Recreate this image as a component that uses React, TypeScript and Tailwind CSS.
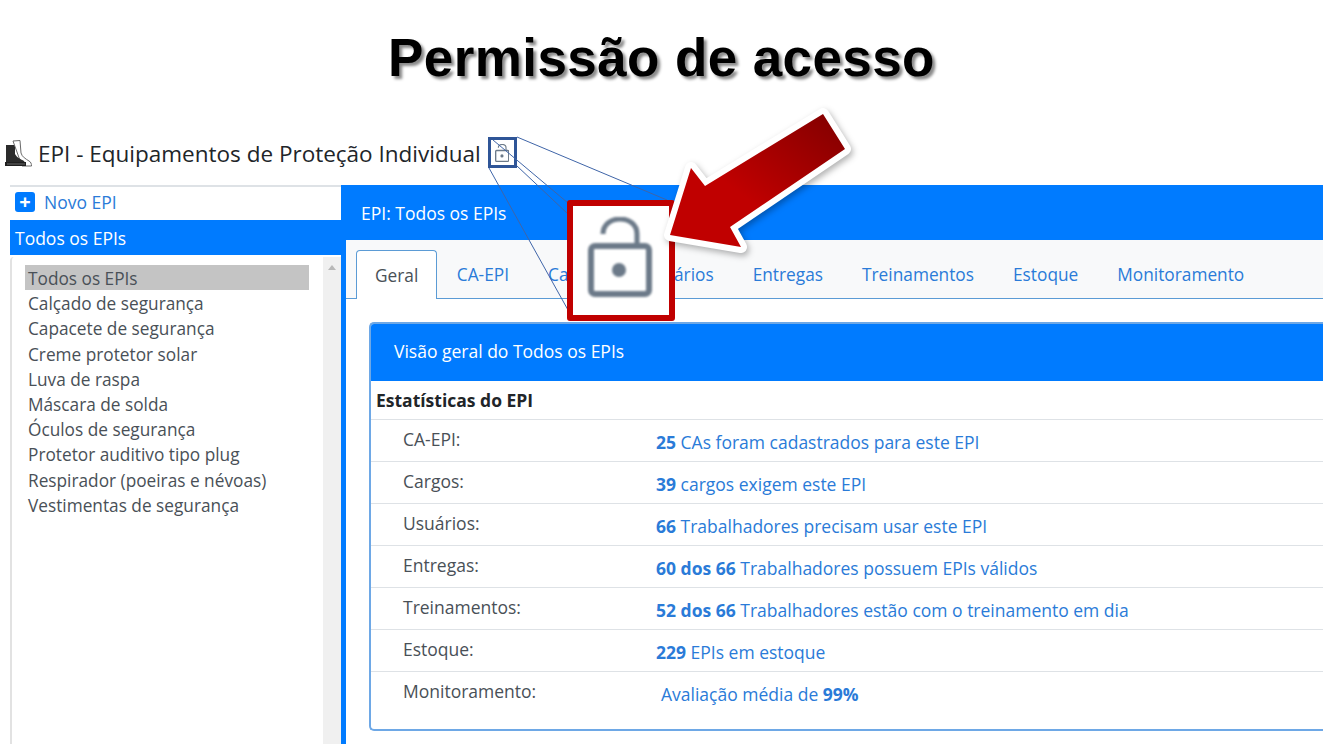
import React from 'react';

const categories = [
  'Todos os EPIs',
  'Calçado de segurança',
  'Capacete de segurança',
  'Creme protetor solar',
  'Luva de raspa',
  'Máscara de solda',
  'Óculos de segurança',
  'Protetor auditivo tipo plug',
  'Respirador (poeiras e névoas)',
  'Vestimentas de segurança',
];

const tabs = ['CA-EPI', 'Cargos', 'Usuários', 'Entregas', 'Treinamentos', 'Estoque', 'Monitoramento'];

const stats = [
  { label: 'CA-EPI:', strong: '25', text: ' CAs foram cadastrados para este EPI' },
  { label: 'Cargos:', strong: '39', text: ' cargos exigem este EPI' },
  { label: 'Usuários:', strong: '66', text: ' Trabalhadores precisam usar este EPI' },
  { label: 'Entregas:', strong: '60 dos 66', text: ' Trabalhadores possuem EPIs válidos' },
  { label: 'Treinamentos:', strong: '52 dos 66', text: ' Trabalhadores estão com o treinamento em dia' },
  { label: 'Estoque:', strong: '229', text: ' EPIs em estoque' },
];

function BootIcon() {
  return (
    <svg width="28" height="28" viewBox="0 0 28 28" className="shrink-0">
      <path d="M9 1 L16 0.5 L17 13 C18 17 22 19 25 21 C27 22 27.5 24 27.5 26 L18 26 Z" fill="#fff" stroke="#6a6a6a" strokeWidth="1" />
      <path d="M2 5 H10 L11 7 V14 C13 18 17 19 20 21 C21 22 21 24 21 26 H2 Z" fill="#2b2b2b" />
      <path d="M1 22 H22 V26 H1 Z" fill="#1f1f1f" />
      <path d="M3 24 H21" stroke="#8a8a8a" strokeWidth="0.7" />
    </svg>
  );
}

function UnlockIcon({ height }: { height: number }) {
  return (
    <svg width={height * 0.8} height={height} viewBox="0 0 64 80" fill="none" stroke="#6c7a89">
      <path d="M15 17 C15 -3 49 -3 49 17 V27" strokeWidth="5" />
      <rect x="3" y="29" width="58" height="48" rx="4" strokeWidth="6" />
      <circle cx="31" cy="53" r="7" fill="#6c7a89" stroke="none" />
    </svg>
  );
}

export default function App() {
  return (
    <div className="relative h-[744px] w-[1323px] overflow-hidden bg-white font-['Open_Sans',sans-serif] text-[17.5px] text-[#495057]">
      <h1 className="flex h-[116px] items-center justify-center font-['Liberation_Sans',sans-serif] text-[53px] font-bold tracking-[0.4px] text-black [text-shadow:3px_3px_3px_#8a8a8a]">
        Permissão de acesso
      </h1>

      <div className="flex h-[69px] items-center pl-[4px] pt-[6px]">
        <BootIcon />
        <span className="ml-[6px] text-[22.5px] text-[#212529]">EPI - Equipamentos de Proteção Individual</span>
        <span className="-mt-[2px] ml-[7px] flex h-[31px] w-[29px] items-center justify-center border-[3px] border-[#2f5597]">
          <UnlockIcon height={18} />
        </span>
      </div>

      <div className="ml-[10px] flex h-[559px]">
        <aside className="flex w-[331px] shrink-0 flex-col border-t-2 border-[#dee2e6]">
          <div className="flex h-[33px] items-center gap-[9px] pb-[3px] pl-[5px] text-[#2a7bd8]">
            <span className="flex h-[20px] w-[20px] items-center justify-center rounded-[3px] bg-[#007bff] text-[20px] font-bold leading-none text-white">+</span>
            Novo EPI
          </div>
          <div className="flex h-[35px] items-center bg-[#007bff] pl-[5px] pt-[2px] text-white">Todos os EPIs</div>
          <div className="mt-[2px] flex flex-1 rounded-t-[4px] border-l-2 border-[#e2e2e2]">
            <ul className="flex-1 pl-[13px] pr-[14px] pt-[8px] text-[17.25px]">
              {categories.map((c, i) => (
                <li key={c} className={`h-[25.2px] pl-[3px] leading-[27px] ${i === 0 ? 'bg-[#c4c4c4]' : ''}`}>{c}</li>
              ))}
            </ul>
            <div className="flex w-[18px] justify-center bg-[#f0f0f0] pt-[8px]">
              <div className="h-0 w-0 border-x-[4px] border-b-[5px] border-x-transparent border-b-[#b8b8b8]" />
            </div>
          </div>
        </aside>

        <main className="flex min-w-0 flex-1 flex-col border-l-[5px] border-[#007bff]">
          <div className="flex h-[55px] items-center bg-[#007bff] pl-[15px] pt-[2px] text-white">EPI: Todos os EPIs</div>
          <nav className="flex h-[59px] items-end border-b border-[#5b9bd5] bg-[#f8f9fa] pl-[10px] text-[17.3px]">
            <span className="-mb-px flex h-[49px] items-center rounded-t-[4px] border border-b-0 border-[#5b9bd5] bg-white px-[18px] pt-[1px]">Geral</span>
            {tabs.map(t => (
              <span key={t} className="flex h-[48px] items-center px-[19.5px] pt-[2px] text-[#2a7bd8]">{t}</span>
            ))}
          </nav>
          <section className="ml-[23px] mt-[23px] h-[409px] rounded-l-[5px] border-y-2 border-l-2 border-[#6ea8e6]">
            <div className="flex h-[57px] items-center rounded-tl-[3px] bg-[#007bff] pb-[2px] pl-[23px] text-white">Visão geral do Todos os EPIs</div>
            <div className="flex h-[39px] items-center border-b border-[#dee2e6] pl-[5px] font-bold text-[#212529]">Estatísticas do EPI</div>
            {stats.map(s => (
              <div key={s.label} className="flex h-[42px] border-b border-[#dee2e6]">
                <span className="w-[285px] pl-[32px] pt-[6px]">{s.label}</span>
                <span className="pt-[9px] text-[#2a7bd8]"><b>{s.strong}</b>{s.text}</span>
              </div>
            ))}
            <div className="flex h-[42px]">
              <span className="w-[290px] pl-[32px] pt-[6px]">Monitoramento:</span>
              <span className="pt-[9px] text-[#2a7bd8]">Avaliação média de <b>99%</b></span>
            </div>
          </section>
        </main>
      </div>

      {/* callout over the page */}
      <svg className="pointer-events-none absolute left-0 top-0" width="1323" height="744">
        <g stroke="#3f65a8" strokeWidth="1">
          <line x1="517" y1="137" x2="667" y2="200" />
          <line x1="493" y1="140" x2="568" y2="203" />
          <line x1="517" y1="166" x2="568" y2="214" />
          <line x1="489" y1="168" x2="568" y2="310" />
        </g>
      </svg>
      <div className="absolute left-[567px] top-[200px] flex h-[121px] w-[108px] items-center justify-center rounded-[3px] border-[6px] border-[#c00000] bg-white pb-[8px] pr-[3px]">
        <div className="blur-[1px]">
          <UnlockIcon height={80} />
        </div>
      </div>
      <svg className="pointer-events-none absolute left-0 top-0 drop-shadow-[2px_3px_3px_rgba(0,0,0,0.3)]" width="1323" height="744">
        <defs>
          <linearGradient id="arrow" x1="0" y1="1" x2="1" y2="0">
            <stop offset="0.4" stopColor="#c00000" />
            <stop offset="1" stopColor="#800000" />
          </linearGradient>
        </defs>
        <polygon
          points="670,235 691,168 705,186 823,114 845,149 730,227 741,247"
          fill="url(#arrow)"
          stroke="#fff"
          strokeWidth="12"
          strokeLinejoin="round"
          paintOrder="stroke"
        />
      </svg>
    </div>
  );
}
